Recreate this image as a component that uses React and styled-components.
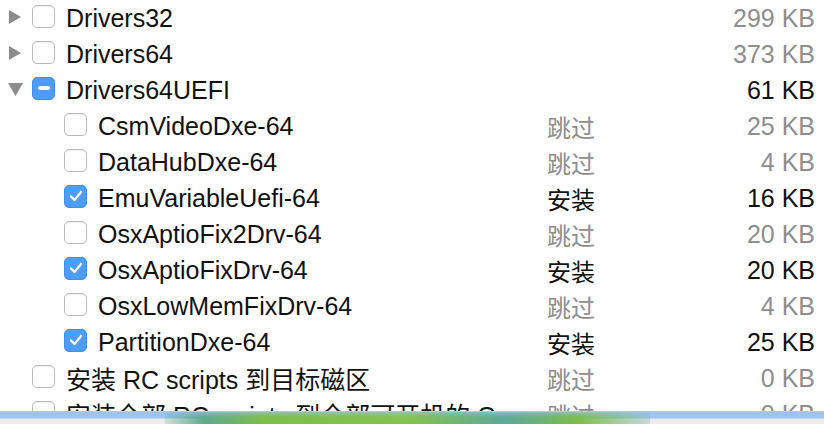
import React from 'react';
import styled, { createGlobalStyle } from 'styled-components';

const GlobalStyle = createGlobalStyle`
	html, body {
		margin: 0;
		padding: 0;
		background: #ffffff;
		overflow: hidden;
	}
	body {
		font-family: 'Liberation Sans', 'Noto Sans CJK SC', sans-serif;
	}
`;

const rows = [
	{ level: 0, toggle: 'closed', check: 'off', name: 'Drivers32', size: '299 KB' },
	{ level: 0, toggle: 'closed', check: 'off', name: 'Drivers64', size: '373 KB' },
	{ level: 0, toggle: 'open', check: 'mixed', name: 'Drivers64UEFI', size: '61 KB' },
	{ level: 1, check: 'off', name: 'CsmVideoDxe-64', status: '跳过', size: '25 KB' },
	{ level: 1, check: 'off', name: 'DataHubDxe-64', status: '跳过', size: '4 KB' },
	{ level: 1, check: 'on', name: 'EmuVariableUefi-64', status: '安装', size: '16 KB' },
	{ level: 1, check: 'off', name: 'OsxAptioFix2Drv-64', status: '跳过', size: '20 KB' },
	{ level: 1, check: 'on', name: 'OsxAptioFixDrv-64', status: '安装', size: '20 KB' },
	{ level: 1, check: 'off', name: 'OsxLowMemFixDrv-64', status: '跳过', size: '4 KB' },
	{ level: 1, check: 'on', name: 'PartitionDxe-64', status: '安装', size: '25 KB' },
	{ level: 0, check: 'off', name: '安装 RC scripts 到目标磁区', status: '跳过', size: '0 KB' },
	{ level: 0, check: 'off', name: '安装全部 RC scripts 到全部可开机的 OS X 磁区', status: '跳过', size: '0 KB' },
];

export default function App() {
	return (
		<Page>
			<GlobalStyle />
			<List>
				{rows.map((r) => {
					const active = r.check !== 'off';
					return (
						<Row key={r.name} $level={r.level}>
							<Toggle>
								{r.toggle === 'closed' && (
									<svg width="14" height="14" viewBox="0 0 14 14">
										<path d="M1 0 L13 7 L1 14 Z" fill="#8c8c8c" />
									</svg>
								)}
								{r.toggle === 'open' && (
									<svg width="15" height="14" viewBox="0 0 15 14">
										<path d="M0 1 L15 1 L7.5 14 Z" fill="#8c8c8c" />
									</svg>
								)}
							</Toggle>
							<Check $on={active}>
								{r.check === 'on' && (
									<svg width="14" height="12" viewBox="0 0 14 12">
										<path
											d="M2 6.5 L5.5 10 L12 2"
											fill="none"
											stroke="#ffffff"
											strokeWidth="2.2"
											strokeLinecap="round"
											strokeLinejoin="round"
										/>
									</svg>
								)}
								{r.check === 'mixed' && <Dash />}
							</Check>
							<Name>{r.name}</Name>
							<Status $on={active}>{r.status}</Status>
							<Size $on={active}>{r.size}</Size>
						</Row>
					);
				})}
			</List>
			<Footer>
				<Glow />
			</Footer>
		</Page>
	);
}

const Page = styled.div`
	width: 824px;
	height: 424px;
	display: flex;
	flex-direction: column;
	overflow: hidden;
`;

const List = styled.div`
	height: 411px;
	overflow: hidden;
	flex: none;
`;

const Row = styled.div`
	height: 36px;
	display: flex;
	align-items: center;
	padding-left: ${(p) => 8 + p.$level * 32}px;
	padding-right: 9px;
	font-size: 25px;
	color: #111111;
	white-space: nowrap;
`;

const Toggle = styled.div`
	width: 24px;
	flex: none;
	display: flex;
	align-items: center;
	margin-top: -2px;
`;

const Check = styled.div`
	width: 23px;
	height: 23px;
	box-sizing: border-box;
	flex: none;
	margin-right: 11px;
	margin-top: -4px;
	border-radius: 5px;
	display: flex;
	align-items: center;
	justify-content: center;
	background: ${(p) => (p.$on ? '#4c9cf8' : '#ffffff')};
	border: 1px solid ${(p) => (p.$on ? '#3f8ff0' : '#b9b9b9')};
	box-shadow: ${(p) => (p.$on ? 'none' : 'inset 0 1px 1px rgba(0,0,0,0.05)')};
`;

const Dash = styled.div`
	width: 12px;
	height: 4px;
	border-radius: 2px;
	background: #ffffff;
`;

const Name = styled.div`
	flex: 1;
	min-width: 0;
	overflow: hidden;
	text-overflow: ellipsis;
	padding-right: 22px;
`;

const Status = styled.div`
	width: 118px;
	flex: none;
	font-size: 24px;
	color: ${(p) => (p.$on ? '#111111' : '#8e8e8e')};
`;

const Size = styled.div`
	width: 150px;
	flex: none;
	text-align: right;
	color: ${(p) => (p.$on ? '#111111' : '#8e8e8e')};
`;

const Footer = styled.div`
	flex: none;
	height: 12px;
	border-top: 1px solid #c6c6c6;
	background: linear-gradient(to bottom, #9cc4ee 0, #9cc4ee 6px, #ececec 7px, #ececec 100%);
	display: flex;
`;

const Glow = styled.div`
	margin-left: 165px;
	width: 485px;
	height: 100%;
	background:
		linear-gradient(to bottom, rgba(156, 196, 238, 0.6) 0, rgba(156, 196, 238, 0) 5px),
		linear-gradient(
			to right,
			rgba(100, 170, 160, 0.2) 0,
			#5faa8e 8%,
			#7cbd4c 20%,
			#86c251 50%,
			#5ea99a 70%,
			#7cbd4c 85%,
			rgba(140, 190, 200, 0.4) 100%
		);
`;
